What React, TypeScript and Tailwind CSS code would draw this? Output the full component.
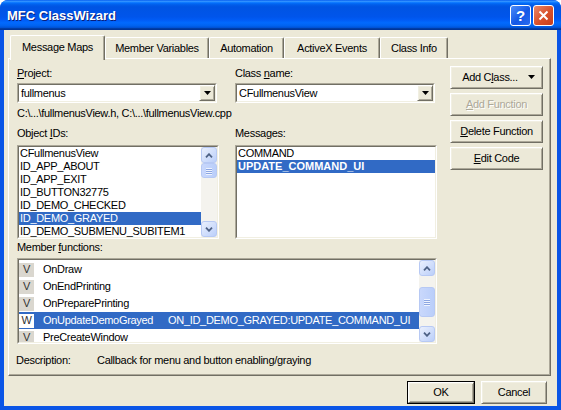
import React from 'react';

const raised =
  'border border-t-white border-l-white border-r-[#716F64] border-b-[#716F64] shadow-[inset_1px_1px_0_#F1EFE2,inset_-1px_-1px_0_#ACA899] bg-[#ECE9D8]';

function U({ children }: { children: React.ReactNode }) {
  return <span className="underline underline-offset-[1px] decoration-[1px]">{children}</span>;
}

function Button({
  children,
  disabled,
  className = '',
}: {
  children: React.ReactNode;
  disabled?: boolean;
  className?: string;
}) {
  return (
    <div
      className={`flex items-center justify-center h-[23px] ${raised} ${
        disabled ? 'text-[#ACA899] [text-shadow:1px_1px_0_#ffffff]' : 'text-black'
      } ${className}`}
    >
      {children}
    </div>
  );
}

function Sunken({ className = '', children }: { className?: string; children: React.ReactNode }) {
  return (
    <div className={`border border-t-[#ACA899] border-l-[#ACA899] border-r-white border-b-white ${className}`}>
      <div className="h-full flex bg-white border border-t-[#716F64] border-l-[#716F64] border-r-[#F1EFE2] border-b-[#F1EFE2] overflow-hidden">
        {children}
      </div>
    </div>
  );
}

function DownTri() {
  return (
    <svg width="7" height="4" viewBox="0 0 7 4">
      <path d="M0 0h7L3.5 4z" fill="#000" />
    </svg>
  );
}

function Combo({ value }: { value: string }) {
  return (
    <Sunken className="w-[200px] h-[20px]">
      <div className="flex-1 pl-[2px] flex items-center">{value}</div>
      <div className={`w-[16px] h-full flex items-center justify-center ${raised}`}>
        <DownTri />
      </div>
    </Sunken>
  );
}

function ScrollBtn({ dir }: { dir: 'up' | 'down' }) {
  return (
    <div className="w-[16px] h-[16px] rounded-[3px] border border-[#B7C9F4] bg-[linear-gradient(135deg,#EAF0FD,#BBCFFA)] flex items-center justify-center">
      <svg width="8" height="5" viewBox="0 0 8 5">
        <path
          d={dir === 'up' ? 'M1 4.3L4 1.2L7 4.3' : 'M1 0.7L4 3.8L7 0.7'}
          stroke="#4D6185"
          strokeWidth="1.8"
          fill="none"
        />
      </svg>
    </div>
  );
}

function Thumb({ h }: { h: number }) {
  return (
    <div
      className="w-[16px] rounded-[3px] border border-[#B7C9F4] bg-[linear-gradient(90deg,#C9D8FC,#BACEFA)] flex items-center justify-center"
      style={{ height: h }}
    >
      <svg width="8" height="8" viewBox="0 0 8 8">
        <path d="M1 1.5h6M1 3.5h6M1 5.5h6M1 7.5h6" stroke="#EEF3FE" strokeWidth="1" />
        <path d="M1 2.5h6M1 4.5h6M1 6.5h6" stroke="#8CA6E2" strokeWidth="1" />
      </svg>
    </div>
  );
}

function ScrollBar({ thumbTop, thumbH }: { thumbTop: number; thumbH: number }) {
  return (
    <div className="w-[16px] h-full flex flex-col bg-[#F4F3EE]">
      <ScrollBtn dir="up" />
      <div style={{ height: thumbTop }} />
      <Thumb h={thumbH} />
      <div className="flex-1" />
      <ScrollBtn dir="down" />
    </div>
  );
}

const objectIds = [
  'CFullmenusView',
  'ID_APP_ABOUT',
  'ID_APP_EXIT',
  'ID_BUTTON32775',
  'ID_DEMO_CHECKED',
  'ID_DEMO_GRAYED',
  'ID_DEMO_SUBMENU_SUBITEM1',
];

const members = [
  { t: 'V', name: 'OnDraw', handler: '' },
  { t: 'V', name: 'OnEndPrinting', handler: '' },
  { t: 'V', name: 'OnPreparePrinting', handler: '' },
  { t: 'W', name: 'OnUpdateDemoGrayed', handler: 'ON_ID_DEMO_GRAYED:UPDATE_COMMAND_UI', sel: true },
  { t: 'V', name: 'PreCreateWindow', handler: '' },
];

const tabs = [
  { label: 'Message Maps', w: 95, sel: true },
  { label: 'Member Variables', w: 104 },
  { label: 'Automation', w: 75 },
  { label: 'ActiveX Events', w: 96 },
  { label: 'Class Info', w: 68 },
];

export default function App() {
  return (
    <div className="w-[561px] h-[410px] flex flex-col bg-[#0A55E6] rounded-t-[8px] overflow-hidden font-['Liberation_Sans',Arial,sans-serif] text-[11px] leading-[13px] tracking-[-0.3px] text-black">
      {/* title bar */}
      <div className="h-[30px] shrink-0 flex items-center pl-[7px] pr-[7px] bg-[linear-gradient(to_bottom,#0058EE_0%,#3593FF_4%,#288EFF_6%,#127DFF_8%,#036FFC_10%,#0262EE_14%,#0057E5_20%,#0054E3_24%,#0055EB_56%,#005BF5_66%,#026AFE_76%,#0062EF_86%,#0052D6_92%,#0040AB_94%,#003092_100%)]">
        <span className="flex-1 text-white font-bold text-[13px] tracking-normal [text-shadow:1px_1px_0_#0A1E7A]">
          MFC ClassWizard
        </span>
        <div className="flex gap-[2px]">
          <div className="w-[21px] h-[21px] rounded-[3px] border border-white bg-[linear-gradient(135deg,#4C8CF8,#1458E6_55%,#2A6BF0)] flex items-center justify-center text-white font-bold text-[15px] tracking-normal">
            ?
          </div>
          <div className="w-[21px] h-[21px] rounded-[3px] border border-white bg-[linear-gradient(135deg,#E8876A,#D8502A_55%,#C63E1C)] flex items-center justify-center">
            <svg width="11" height="11" viewBox="0 0 11 11">
              <path d="M1.5 1.5L9.5 9.5M9.5 1.5L1.5 9.5" stroke="#fff" strokeWidth="2" />
            </svg>
          </div>
        </div>
      </div>

      {/* body */}
      <div className="flex-1 mx-[4px] mb-[4px] bg-[#ECE9D8] flex flex-col pl-[4px] pr-[6px]">
        {/* tabs */}
        <div className="mt-[5px] h-[23px] flex items-end pl-[2px]">
          {tabs.map((t) =>
            t.sel ? (
              <div
                key={t.label}
                className="relative z-10 h-[25px] -mb-[2px] bg-[#ECE9D8] border-l border-t border-white border-r border-r-[#716F64] shadow-[inset_-1px_0_0_#ACA899] rounded-tl-[2px] rounded-tr-[2px] flex items-center justify-center pb-[1px]"
                style={{ width: t.w }}
              >
                {t.label}
              </div>
            ) : (
              <div
                key={t.label}
                className="h-[21px] border-l border-t border-white border-r border-r-[#716F64] shadow-[inset_-1px_0_0_#ACA899] rounded-tl-[2px] rounded-tr-[2px] flex items-center justify-center"
                style={{ width: t.w }}
              >
                {t.label}
              </div>
            )
          )}
        </div>

        {/* panel */}
        <div className="border border-t-white border-l-white border-r-[#716F64] border-b-[#716F64] shadow-[inset_-1px_-1px_0_#ACA899] flex pl-[8px] pr-[7px] pb-[8px]">
          <div className="w-[420px] flex flex-col">
            <div className="mt-[8px] flex h-[13px]">
              <div className="w-[218px]">
                <U>P</U>roject:
              </div>
              <div>
                Class <U>n</U>ame:
              </div>
            </div>
            <div className="mt-[3px] flex gap-[18px]">
              <Combo value="fullmenus" />
              <Combo value="CFullmenusView" />
            </div>
            <div className="mt-[4px] h-[13px]">C:\...\fullmenusView.h, C:\...\fullmenusView.cpp</div>
            <div className="mt-[7px] flex h-[13px]">
              <div className="w-[218px]">
                Object <U>I</U>Ds:
              </div>
              <div>
                Messa<U>g</U>es:
              </div>
            </div>
            <div className="mt-[5px] flex gap-[16px]">
              <Sunken className="w-[202px] h-[94px]">
                <div className="flex-1 flex flex-col whitespace-nowrap">
                  {objectIds.map((id) => (
                    <div
                      key={id}
                      className={`h-[13px] pl-[1px] ${
                        id === 'ID_DEMO_GRAYED' ? 'bg-[#316AC5] text-white' : ''
                      }`}
                    >
                      {id}
                    </div>
                  ))}
                </div>
                <ScrollBar thumbTop={0} thumbH={15} />
              </Sunken>
              <Sunken className="w-[202px] h-[94px]">
                <div className="flex-1 flex flex-col whitespace-nowrap">
                  <div className="h-[13px] pl-[1px]">COMMAND</div>
                  <div className="h-[13px] pl-[1px] bg-[#316AC5] text-white font-bold tracking-[0px]">
                    UPDATE_COMMAND_UI
                  </div>
                </div>
              </Sunken>
            </div>
            <div className="mt-[2px] h-[13px]">
              Member <U>f</U>unctions:
            </div>
            <Sunken className="mt-[4px] w-[420px] h-[86px]">
              <div className="flex-1 flex flex-col pt-[1px] whitespace-nowrap">
                {members.map((m) => (
                  <div
                    key={m.name}
                    className={`h-[17px] shrink-0 flex items-center ${m.sel ? 'bg-[#316AC5] text-white' : ''}`}
                  >
                    <div
                      className={`w-[15px] h-[14px] flex items-center justify-center text-[#333] ${
                        m.sel ? 'bg-white' : 'bg-[#DAD7CF]'
                      }`}
                    >
                      {m.t}
                    </div>
                    <div className="ml-[9px] w-[125px]">{m.name}</div>
                    <div>{m.handler}</div>
                  </div>
                ))}
              </div>
              <ScrollBar thumbTop={11} thumbH={30} />
            </Sunken>
            <div className="mt-[10px] h-[13px] flex -ml-[1px]">
              <div className="w-[81px]">Description:</div>
              <div>Callback for menu and button enabling/graying</div>
            </div>
          </div>

          <div className="ml-[13px] w-[93px] pt-[7px] flex flex-col gap-[4px]">
            <Button>
              <span className="ml-[4px]">
                Add C<U>l</U>ass...
              </span>
              <span className="ml-[10px] mb-[1px]">
                <DownTri />
              </span>
            </Button>
            <Button disabled>
              <span className="underline underline-offset-[1px]">A</span>dd Function
            </Button>
            <Button>
              <U>D</U>elete Function
            </Button>
            <Button>
              <U>E</U>dit Code
            </Button>
          </div>
        </div>

        {/* bottom buttons */}
        <div className="mt-[5px] flex justify-end gap-[6px] mr-[4px]">
          <div className="border border-black w-[68px] h-[23px]">
            <Button className="h-full">OK</Button>
          </div>
          <Button className="w-[66px]">Cancel</Button>
        </div>
      </div>
    </div>
  );
}
